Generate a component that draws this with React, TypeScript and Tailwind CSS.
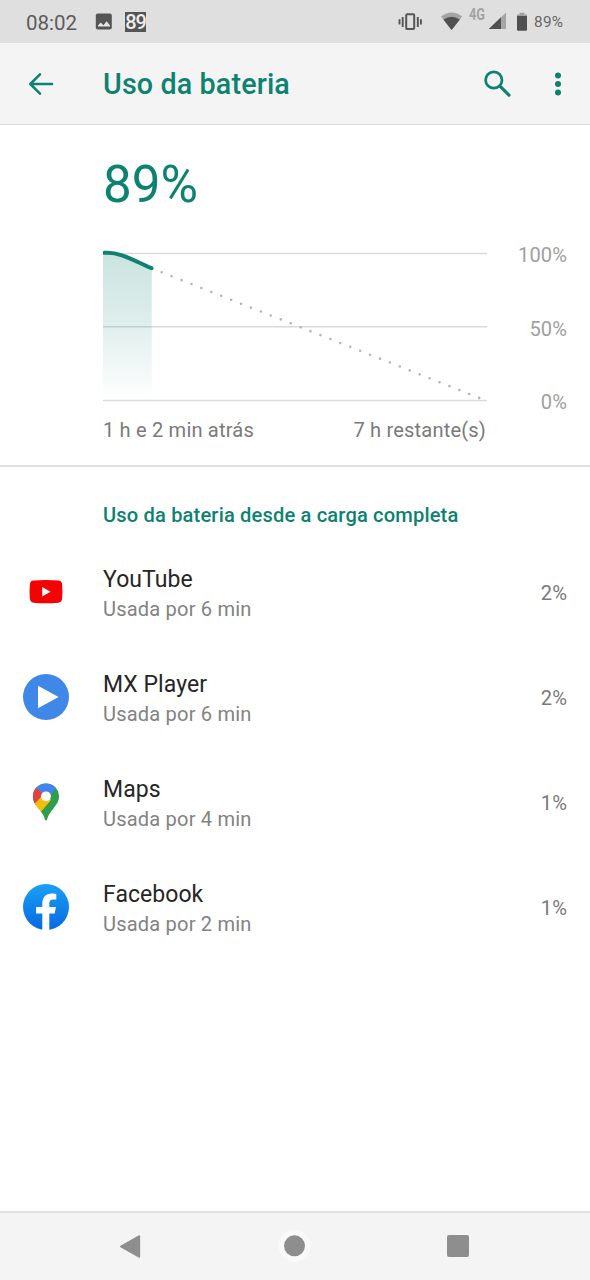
import React from "react";

function StatusBar() {
  return (
    <div className="flex h-[43px] items-start bg-[#dfdfdf] text-[#5c5c5c]">
      <div className="ml-[26px] mt-[11px] w-[69px] text-[20.5px] leading-6">08:02</div>
      <svg className="mt-[13px] size-[17px]" viewBox="0 0 17 17">
        <rect x="0.8" y="0.5" width="16" height="16" rx="2" fill="#555" />
        <path d="M3 13.6V12.400L5.800 9.400l2.600 2.800 3.300-4 3.300 4.200v1.200z" fill="#e6e6e6" />
      </svg>
      <div className="ml-[13px] mt-[12px] flex h-5 w-[21px] items-center justify-center bg-[#555] text-[20px] leading-5 font-medium tracking-[-1.1px] text-[#eee]">
        89
      </div>
      <svg className="ml-[252px] mt-[12px] h-[20px] w-[25px]" viewBox="398 12 25 20">
        <rect x="406.2" y="14.2" width="8" height="14.8" rx="1" fill="none" stroke="#555" strokeWidth="2" />
        <path d="M399.500 19.200v5.400M402.700 17v10M417.800 17v10M420.900 19.200v5.400" stroke="#555" strokeWidth="1.9" fill="none" />
      </svg>
      <svg className="ml-[17px] mt-[12px] h-[20px] w-[24px]" viewBox="440 12 24 20">
        <path d="M441 16.400Q451.600 8.600 462.200 16.400L451.600 30z" fill="#a5a5a5" />
        <path d="M443.400 19.400Q451.600 14 459.800 19.400L451.600 30z" fill="#505050" />
      </svg>
      <div className="ml-[5px] mt-[5px] w-[17px] origin-left scale-x-[0.8] text-[16px] leading-5 font-bold text-[#a3a3a3]">4G</div>
      <svg className="ml-[2px] mt-[12px] h-[20px] w-[19px]" viewBox="488 12 19 20">
        <path d="M506 12.5V29h-17.2z" fill="#a5a5a5" />
        <path d="M501 17.3V29h-12.2z" fill="#505050" />
      </svg>
      <svg className="ml-[9px] mt-[12px] h-[20px] w-[12px]" viewBox="516 12 12 20">
        <path d="M519.6 12.8h4.8v1.8h2.6v2.6h-10v-2.6h2.6z" fill="#a0a0a0" />
        <path d="M517 16h10v13.6q0 1.2-1.2 1.2h-7.6q-1.2 0-1.2-1.2z" fill="#505050" />
      </svg>
      <div className="ml-[6px] mt-[12px] text-[15.3px] leading-5 tracking-[0.3px] text-[#666]">89%</div>
    </div>
  );
}

function AppBar() {
  return (
    <header className="flex h-[82px] items-center border-b border-[#dcdcdc] bg-[#f4f4f4] text-[#0e8271]">
      <svg className="ml-[27px] h-7 w-7" viewBox="27 70 28 28" fill="none" stroke="currentColor" strokeWidth="2.6" strokeLinecap="round" strokeLinejoin="round">
        <path d="M52 84H30.5M40 74.3 30.3 84l9.7 9.7" />
      </svg>
      <h1 className="ml-[48px] w-[380px] pt-px text-[28.7px] leading-9 font-medium tracking-[0.13px]">Uso da bateria</h1>
      <svg className="h-[30px] w-[30px]" viewBox="483 69 30 30" fill="none" stroke="currentColor">
        <circle cx="493.800" cy="80" r="8.2" strokeWidth="2.7" />
        <path d="m500 86.200 9 9" strokeWidth="3.2" strokeLinecap="round" />
      </svg>
      <svg className="ml-[41px] h-[30px] w-2" viewBox="554 69 8 30" fill="currentColor">
        <circle cx="558" cy="75.4" r="3" />
        <circle cx="558" cy="84" r="3" />
        <circle cx="558" cy="92.6" r="3" />
      </svg>
    </header>
  );
}

function BatteryChart() {
  return (
    <section className="border-b-2 border-[#e0e0e0] pt-[30px] pb-[23px] pl-[103px]">
      <div className="text-[51.2px] leading-[60px] text-[#0e8271]">89%</div>
      <div className="mt-[28px] flex h-[171px]">
        <svg className="h-[171px] w-[385px]" viewBox="103 243 385 171">
          <defs>
            <linearGradient id="usage" x1="0" y1="0" x2="0" y2="1">
              <stop offset="0" stopColor="#0e8271" stopOpacity="0.22" />
              <stop offset="0.45" stopColor="#0e8271" stopOpacity="0.14" />
              <stop offset="1" stopColor="#0e8271" stopOpacity="0" />
            </linearGradient>
          </defs>
          <path d="M103 253.5H487M103 326.7H487M103 400.5H487" stroke="#dadada" strokeWidth="1.5" />
          <path d="M103 252.8C121 251 135 262 151.8 268.3V400H103z" fill="url(#usage)" />
          <path d="M161.7 272.3 480 398.2" stroke="#b5b5b5" strokeWidth="2.6" strokeLinecap="round" strokeDasharray="0 10.67" />
          <path d="M104.5 252.8C121 251.6 135 261.5 151.5 268.2" fill="none" stroke="#0e8271" strokeWidth="4" strokeLinecap="round" />
        </svg>
        <div className="flex w-[79px] flex-col justify-between text-right text-[20.1px] leading-6 tracking-[0.1px] text-[#a0a0a0]">
          <span>100%</span>
          <span>50%</span>
          <span>0%</span>
        </div>
      </div>
      <div className="mt-1 flex w-[383px] justify-between text-[20.1px] leading-6 tracking-[0.17px] text-[#7a7a7a]">
        <span>1 h e 2 min atrás</span>
        <span>7 h restante(s)</span>
      </div>
    </section>
  );
}

function YouTubeIcon() {
  return (
    <svg className="size-[46px]" viewBox="0 0 46 46">
      <path d="M10.5 11.5Q23 10.3 35.5 11.5 38.700 11.700 39.1 15.200 39.8 22.700 39.1 29.700 38.7 33.300 35.5 33.700 23 34.900 10.5 33.700 7.3 33.300 6.9 29.700 6.2 22.700 6.9 15.200 7.3 11.700 10.5 11.500Z" fill="#f60002" />
      <path d="M19.2 17.900v9.6l8.400-4.800z" fill="#fff" />
    </svg>
  );
}

function PlayerIcon() {
  return (
    <svg className="size-[46px]" viewBox="0 0 46 46">
      <circle cx="23" cy="23" r="23" fill="#4088e8" />
      <path d="M15 11.8v22.4L35.6 23z" fill="#fff" />
    </svg>
  );
}

function MapsIcon() {
  return (
    <svg className="size-[46px]" viewBox="0 0 46 46">
      <defs>
        <clipPath id="pin">
          <path d="M23 4.5C15.6 4.5 10 10.3 10 17.3c0 5.2 2.3 8 5.6 12.2 3.2 4 5 6.6 6 10 .4 1.4.7 2 1.4 2s1-.6 1.4-2c1-3.4 2.8-6 6-10C33.7 25.3 36 22.5 36 17.3 36 10.3 30.4 4.5 23 4.5z" />
        </clipPath>
      </defs>
      <g clipPath="url(#pin)">
        <rect width="46" height="46" fill="#2e9e4c" />
        <path d="M0 0H46L33.5 8.5 19 27 5 30z" fill="#4284ee" />
        <path d="M8 33 19 18 28 20.3 15.3 34.500z" fill="#fbbc09" />
        <path d="M5 28V5l7.600 3.400 7 5.800-8.200 13.600z" fill="#e04338" />
        <path d="M10 26.500 19 17l9 4L16 35z" fill="#fbbc09" />
      </g>
      <circle cx="23" cy="17.3" r="4.9" fill="#fff" />
    </svg>
  );
}

function FacebookIcon() {
  return (
    <svg className="size-[46px]" viewBox="0 0 46 46">
      <defs>
        <linearGradient id="fb" x1="0" y1="0" x2="0" y2="1">
          <stop offset="0" stopColor="#1aa0f6" />
          <stop offset="1" stopColor="#0768e2" />
        </linearGradient>
      </defs>
      <circle cx="23" cy="23" r="23" fill="url(#fb)" />
      <path d="M19.3 46V29.6h-6.2v-6.5h6.2v-3c0-7 3.2-10.7 9.8-10.7 1.9 0 3.300.3 4.200.5v5.500h-2.400c-3.5 0-4.6 1.5-4.6 4.2v3.5h6.600l-1.200 6.500h-5.400V46q-3.500.4-7 0z" fill="#fff" />
    </svg>
  );
}

const apps = [
  { name: "YouTube", used: "Usada por 6 min", share: "2%", Icon: YouTubeIcon },
  { name: "MX Player", used: "Usada por 6 min", share: "2%", Icon: PlayerIcon },
  { name: "Maps", used: "Usada por 4 min", share: "1%", Icon: MapsIcon },
  { name: "Facebook", used: "Usada por 2 min", share: "1%", Icon: FacebookIcon },
];

function UsageList() {
  return (
    <section className="flex-1 pt-9">
      <h2 className="ml-[103px] text-[20.1px] leading-6 font-medium tracking-[0.16px] text-[#0e8271]">
        Uso da bateria desde a carga completa
      </h2>
      <ul className="mt-[12px]">
        {apps.map(({ name, used, share, Icon }) => (
          <li key={name} className="flex h-[105px] items-center pr-[23px] pl-[23px]">
            <Icon />
            <div className="ml-[34px] flex-1 pt-[5px]">
              <div className="text-[23px] leading-[30px] tracking-[0.05px] text-[#262626]">{name}</div>
              <div className="text-[20.1px] leading-[29px] tracking-[0.17px] text-[#828282]">{used}</div>
            </div>
            <div className="pt-[3px] text-[20.1px] leading-6 tracking-[0.1px] text-[#7a7a7a]">{share}</div>
          </li>
        ))}
      </ul>
    </section>
  );
}

function NavBar() {
  return (
    <nav className="flex h-[69px] items-center border-t-2 border-[#e0e0e0] bg-[#f4f4f4]">
      <svg className="ml-[118px] h-6 w-6" viewBox="118 1234.5 24 24">
        <path d="M139.4 1235.500v21L120.8 1246z" fill="#8e8e8e" stroke="#8e8e8e" strokeWidth="1.5" strokeLinejoin="round" />
      </svg>
      <svg className="ml-[136px] size-[34px]" viewBox="0 0 34 34">
        <circle cx="16.5" cy="15.800" r="16" fill="#f9f9f9" />
        <circle cx="16.5" cy="15.800" r="10.5" fill="#8e8e8e" />
      </svg>
      <div className="mb-[2px] ml-[135px] size-[22px] rounded-[2px] bg-[#8e8e8e]" />
    </nav>
  );
}

export default function App() {
  return (
    <div className="flex h-[1280px] w-[590px] flex-col overflow-hidden bg-white font-[Roboto,sans-serif]">
      <StatusBar />
      <AppBar />
      <BatteryChart />
      <UsageList />
      <NavBar />
    </div>
  );
}
